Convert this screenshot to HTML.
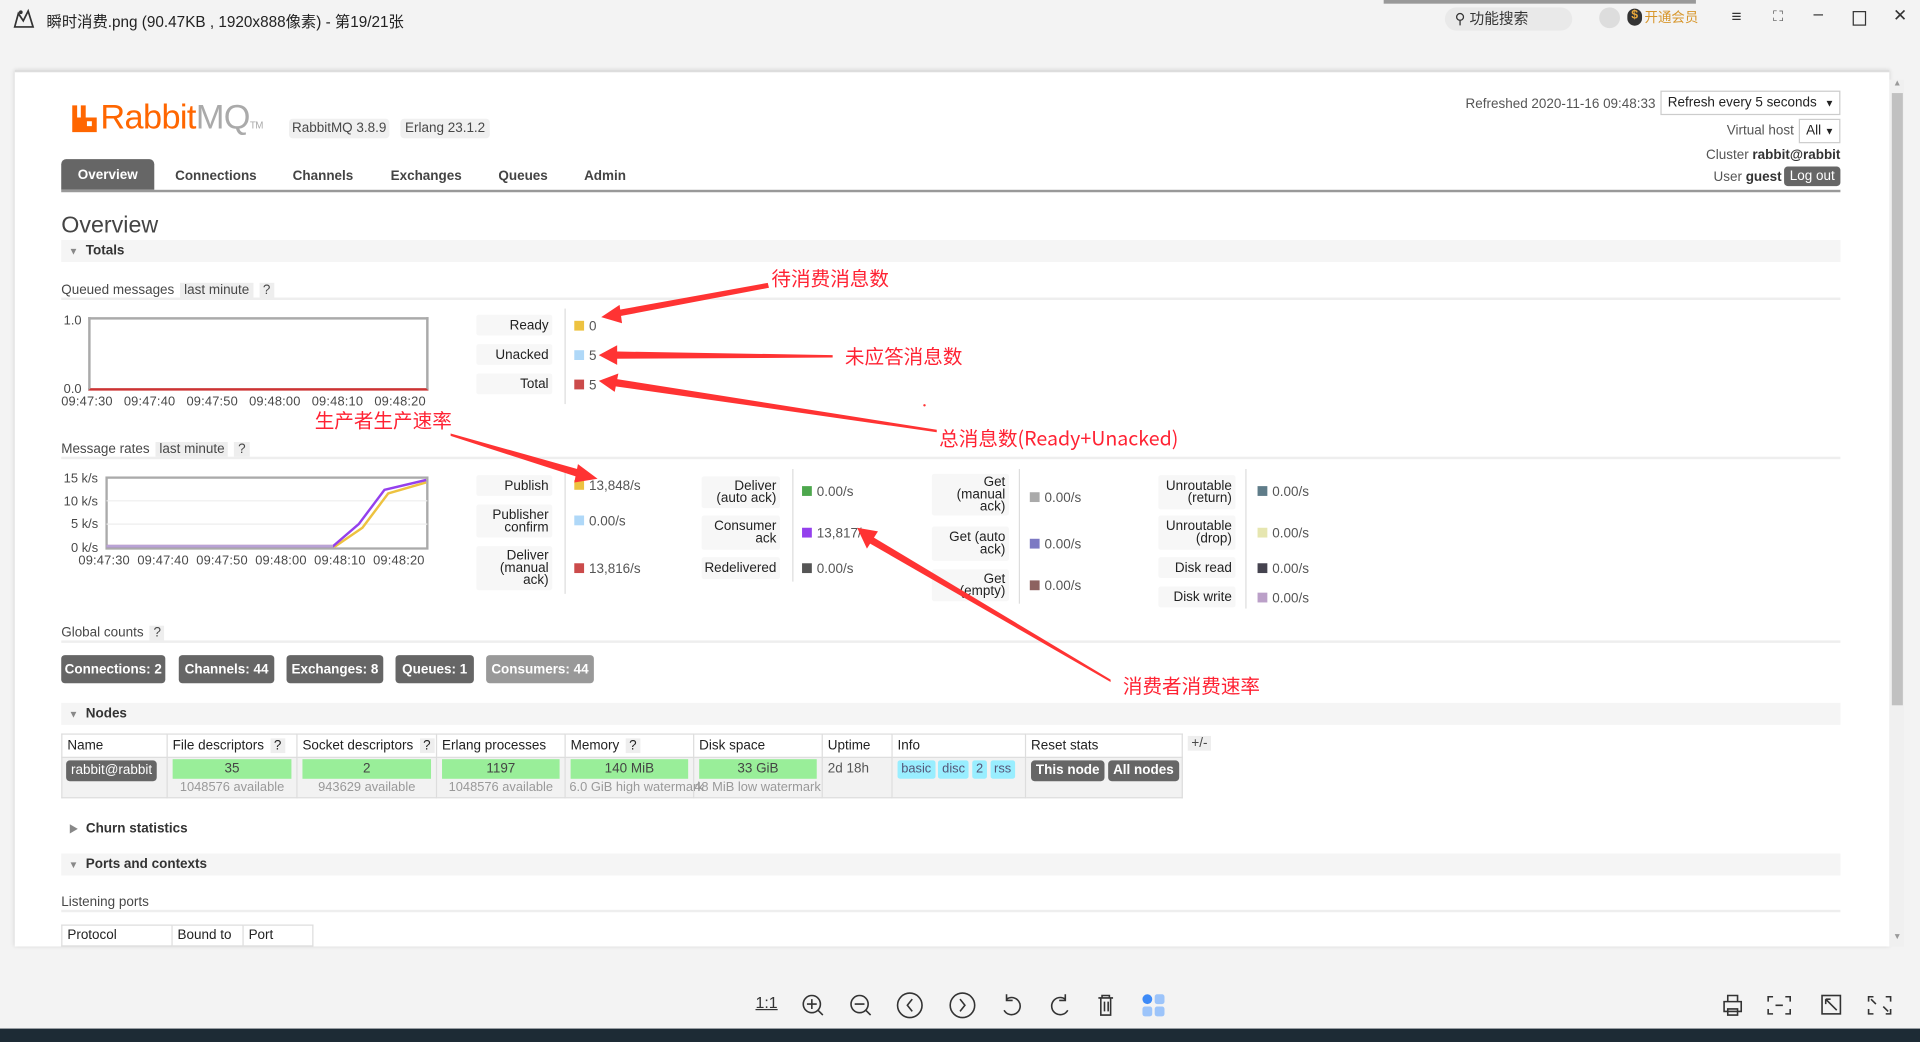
<!DOCTYPE html>
<html><head><meta charset="utf-8"><style>
*{margin:0;padding:0;box-sizing:border-box}
html,body{width:1920px;height:1042px;overflow:hidden;background:#f3f3f3}
#w{position:absolute;left:0;top:0;width:1568px;height:851px;transform:scale(1.22449);transform-origin:0 0;font-family:"Liberation Sans","Noto Sans CJK SC",sans-serif;font-size:11px;color:#484848;background:#f3f3f3}
.a{position:absolute;white-space:nowrap}
.lb{position:absolute;background:#f7f7f7;border-radius:2px;text-align:right;padding-right:3px;line-height:10px;color:#222;font-size:11px;display:flex;align-items:center;justify-content:flex-end}
.v{position:absolute;font-size:11px;color:#555;white-space:nowrap;margin-top:1px}
.v i{display:inline-block;width:8px;height:8px;margin-right:4px;vertical-align:-0px}
.vl{position:absolute;width:1px;background:#ddd}
.bar{position:absolute;left:50px;width:1453px;height:18px;background:#f5f5f5;font-weight:bold;color:#333;padding-left:6px;line-height:19px}
.hl{position:absolute;left:50px;width:1453px;height:2px;background:#eee}
.btn{position:absolute;top:535px;height:23px;background:#666;color:#fff;font-weight:bold;border-radius:3px;line-height:24px;text-align:center}
.q{display:inline-block;background:#eee;padding:0 3px;margin-left:2px}
.cr{color:#f23;font-size:16px;position:absolute;white-space:nowrap;font-family:"Noto Sans CJK SC",sans-serif}
td,th{border:1px solid #ddd;font-weight:normal;text-align:left;padding:0 4px;overflow:visible}
.g{background:#99ee99;color:#444;text-align:center;height:16px;line-height:16px;margin:1px 1px}
.sm{color:#999;text-align:center;font-size:10.5px}
.cy{display:inline-block;background:#99eeff;color:#557;padding:0 3px;border-radius:2px;height:15px;line-height:15px}
.dk{display:inline-block;background:#666;color:#fff;font-weight:bold;padding:0 4px;border-radius:3px;height:17px;line-height:17px}
.t{margin-top:1px}
</style></head><body><div id="w">
<svg class="a" style="left:11px;top:7px" width="18" height="16" viewBox="0 0 18 16"><path d="M1 15 L4 4 L8 10 L12 2 L16 15 Z" fill="none" stroke="#333" stroke-width="1.4"/><circle cx="6" cy="3" r="1.5" fill="#333"/></svg>
<div class="a" style="left:38px;top:7px;font-size:12.5px;color:#222">瞬时消费.png (90.47KB , 1920x888像素) - 第19/21张</div>
<div class="a" style="left:1130px;top:0;width:255px;height:3px;background:#999"></div>
<div class="a" style="left:1180px;top:6px;width:104px;height:19px;background:#e9e9e9;border-radius:10px;font-size:12px;color:#333;padding-left:8px;line-height:19px">⚲ 功能搜索</div>
<div class="a" style="left:1306px;top:6px;width:17px;height:17px;border-radius:50%;background:#ddd"></div>
<div class="a" style="left:1329px;top:7px;width:12px;height:14px;border-radius:6px;background:#333;color:#e9a83b;font-size:10px;text-align:center;font-weight:bold">$</div>
<div class="a" style="left:1343px;top:6px;font-size:11px;color:#d7962b">开通会员</div>
<div class="a" style="left:1414px;top:5px;font-size:14px;color:#333">≡</div>
<div class="a" style="left:1448px;top:6px;font-size:12px;color:#555">⛶</div>
<div class="a" style="left:1481px;top:3px;font-size:14px;color:#333">–</div>
<div class="a" style="left:1513px;top:9px;width:11px;height:12px;border:1px solid #333"></div>
<div class="a" style="left:1546px;top:4px;font-size:14px;color:#333">✕</div>

<div class="a" style="left:12px;top:57px;width:1531px;height:716px;background:#fff;box-shadow:0 0 3px #ccc;border-top:2px solid #ddd"></div>
<div class="a" style="left:1543px;top:65px;width:12px;height:708px;background:#f0f0f0"></div>
<div class="a" style="left:1545px;top:76px;width:9px;height:500px;background:#c1c1c1"></div>
<div class="a" style="left:1546px;top:65px;font-size:7px;color:#999">▲</div>
<div class="a" style="left:1546px;top:762px;font-size:7px;color:#999">▼</div>

<svg class="a" style="left:58px;top:86px" width="22" height="22" viewBox="0 0 22 22"><path d="M1 0h4v10h3V0h4v10h9v12H1z M13 13v4h4v-4z" fill="#f60" fill-rule="evenodd"/></svg>
<div class="a" style="left:82px;top:80px;font-size:28px;color:#f60;letter-spacing:-0.5px">Rabbit<span style="color:#aaa">MQ</span><span style="font-size:8px;color:#aaa">TM</span></div>
<div class="a" style="left:236px;top:97px;width:82px;height:16px;background:#f0f0f0;border-radius:3px;text-align:center;line-height:17px">RabbitMQ 3.8.9</div>
<div class="a" style="left:327px;top:97px;width:73px;height:16px;background:#f0f0f0;border-radius:3px;text-align:center;line-height:17px">Erlang 23.1.2</div>
<div class="a" style="left:50px;top:130px;width:76px;height:25px;background:#666;color:#fff;font-weight:bold;border-radius:4px 4px 0 0;text-align:center;line-height:27px">Overview</div>
<div class="a t" style="left:143px;top:137px;font-weight:bold;color:#444">Connections</div>
<div class="a t" style="left:239px;top:137px;font-weight:bold;color:#444">Channels</div>
<div class="a t" style="left:319px;top:137px;font-weight:bold;color:#444">Exchanges</div>
<div class="a t" style="left:407px;top:137px;font-weight:bold;color:#444">Queues</div>
<div class="a t" style="left:477px;top:137px;font-weight:bold;color:#444">Admin</div>
<div class="a" style="left:50px;top:155px;width:1453px;height:2px;background:#999"></div>
<div class="a t" style="right:216px;top:78px;color:#555">Refreshed 2020-11-16 09:48:33</div>
<div class="a" style="left:1356px;top:74px;width:147px;height:20px;border:1px solid #ccc;padding-left:5px;line-height:19px;color:#222">Refresh every 5 seconds<span style="position:absolute;right:4px;font-size:8px">▼</span></div>
<div class="a t" style="right:103px;top:100px;color:#555">Virtual host</div>
<div class="a" style="left:1469px;top:97px;width:34px;height:20px;border:1px solid #ccc;padding-left:5px;line-height:19px;color:#222">All<span style="position:absolute;right:4px;font-size:8px">▼</span></div>
<div class="a t" style="right:65px;top:120px;color:#555">Cluster <b style="color:#333">rabbit@rabbit</b></div>
<div class="a t" style="right:113px;top:138px;color:#555">User <b style="color:#333">guest</b></div>
<div class="a" style="left:1457px;top:136px;width:46px;height:16px;background:#666;color:#fff;border-radius:3px;text-align:center;line-height:17px">Log out</div>

<div class="a" style="left:50px;top:174px;font-size:19px;color:#444">Overview</div>
<div class="bar" style="top:196px"><span style="font-size:8px;color:#888">▼</span>&nbsp; Totals</div>

<div class="a t" style="left:50px;top:230px">Queued messages <span class="q">last minute</span> <span class="q">?</span></div>
<div class="hl" style="top:243px"></div>
<div class="a" style="left:52px;top:256px;font-size:10.5px">1.0</div>
<div class="a" style="left:52px;top:312px;font-size:10.5px">0.0</div>
<div class="a" style="left:72px;top:259px;width:278px;height:60px;border:2px solid #aaa;border-bottom:2px solid #c33"></div>
<div class="a" style="left:50px;top:322px;font-size:10.5px;letter-spacing:0.15px;word-spacing:6px">09:47:30 09:47:40 09:47:50 09:48:00 09:48:10 09:48:20</div>
<div class="lb" style="left:389px;top:257px;width:62px;height:17px">Ready</div>
<div class="lb" style="left:389px;top:281px;width:62px;height:17px">Unacked</div>
<div class="lb" style="left:389px;top:305px;width:62px;height:17px">Total</div>
<div class="vl" style="left:461px;top:252px;height:78px"></div>
<div class="v" style="left:469px;top:260px"><i style="background:#edc240"></i>0</div>
<div class="v" style="left:469px;top:284px"><i style="background:#afd8f8"></i>5</div>
<div class="v" style="left:469px;top:308px"><i style="background:#cb4b4b"></i>5</div>

<div class="a t" style="left:50px;top:360px">Message rates <span class="q">last minute</span> <span class="q">?</span></div>
<div class="hl" style="top:373px"></div>
<div class="a" style="left:52px;top:385px;font-size:10.5px">15 k/s</div>
<div class="a" style="left:52px;top:404px;font-size:10.5px">10 k/s</div>
<div class="a" style="left:58px;top:422px;font-size:10.5px">5 k/s</div>
<div class="a" style="left:58px;top:442px;font-size:10.5px">0 k/s</div>
<svg class="a" style="left:86px;top:389px" width="264" height="60"><rect x="1" y="1" width="262" height="58" fill="none" stroke="#aaa" stroke-width="2"/><line x1="1" y1="20" x2="263" y2="20" stroke="#eee"/><line x1="1" y1="39" x2="263" y2="39" stroke="#eee"/><polyline points="1,57 188,57 210,42 231,14 262,5" fill="none" stroke="#edc240" stroke-width="2"/><polyline points="1,57 186,57 207,39 228,11 262,3" fill="none" stroke="#9440ed" stroke-width="2"/><line x1="1" y1="57" x2="186" y2="57" stroke="#b9a3d6" stroke-width="2"/></svg>
<div class="a" style="left:64px;top:452px;font-size:10.5px;letter-spacing:0.15px;word-spacing:3px">09:47:30 09:47:40 09:47:50 09:48:00 09:48:10 09:48:20</div>

<div class="lb" style="left:389px;top:388px;width:62px;height:17px">Publish</div>
<div class="lb" style="left:389px;top:412px;width:62px;height:27px">Publisher<br>confirm</div>
<div class="lb" style="left:389px;top:446px;width:62px;height:36px">Deliver<br>(manual<br>ack)</div>
<div class="vl" style="left:461px;top:383px;height:102px"></div>
<div class="v" style="left:469px;top:390px"><i style="background:#edc240"></i>13,848/s</div>
<div class="v" style="left:469px;top:419px"><i style="background:#afd8f8"></i>0.00/s</div>
<div class="v" style="left:469px;top:458px"><i style="background:#cb4b4b"></i>13,816/s</div>

<div class="lb" style="left:573px;top:389px;width:64px;height:26px">Deliver<br>(auto ack)</div>
<div class="lb" style="left:573px;top:421px;width:64px;height:28px">Consumer<br>ack</div>
<div class="lb" style="left:573px;top:455px;width:64px;height:18px">Redelivered</div>
<div class="vl" style="left:647px;top:383px;height:92px"></div>
<div class="v" style="left:655px;top:395px"><i style="background:#4da74d"></i>0.00/s</div>
<div class="v" style="left:655px;top:429px"><i style="background:#9440ed"></i>13,817/s</div>
<div class="v" style="left:655px;top:458px"><i style="background:#555"></i>0.00/s</div>

<div class="lb" style="left:761px;top:387px;width:63px;height:34px">Get<br>(manual<br>ack)</div>
<div class="lb" style="left:761px;top:430px;width:63px;height:28px">Get (auto<br>ack)</div>
<div class="lb" style="left:761px;top:465px;width:63px;height:26px">Get<br>(empty)</div>
<div class="vl" style="left:832px;top:383px;height:110px"></div>
<div class="v" style="left:841px;top:400px"><i style="background:#aaa"></i>0.00/s</div>
<div class="v" style="left:841px;top:438px"><i style="background:#7c79c3"></i>0.00/s</div>
<div class="v" style="left:841px;top:472px"><i style="background:#8d6260"></i>0.00/s</div>

<div class="lb" style="left:946px;top:388px;width:63px;height:28px">Unroutable<br>(return)</div>
<div class="lb" style="left:946px;top:421px;width:63px;height:28px">Unroutable<br>(drop)</div>
<div class="lb" style="left:946px;top:455px;width:63px;height:17px">Disk read</div>
<div class="lb" style="left:946px;top:479px;width:63px;height:17px">Disk write</div>
<div class="vl" style="left:1017px;top:383px;height:114px"></div>
<div class="v" style="left:1027px;top:395px"><i style="background:#5f7c89"></i>0.00/s</div>
<div class="v" style="left:1027px;top:429px"><i style="background:#e6e6b0"></i>0.00/s</div>
<div class="v" style="left:1027px;top:458px"><i style="background:#45434f"></i>0.00/s</div>
<div class="v" style="left:1027px;top:482px"><i style="background:#bba0c8"></i>0.00/s</div>

<div class="a t" style="left:50px;top:510px">Global counts <span class="q">?</span></div>
<div class="hl" style="top:523px"></div>
<div class="btn" style="left:50px;width:85px">Connections: 2</div>
<div class="btn" style="left:146px;width:78px">Channels: 44</div>
<div class="btn" style="left:234px;width:79px">Exchanges: 8</div>
<div class="btn" style="left:323px;width:64px">Queues: 1</div>
<div class="btn" style="left:397px;width:88px;background:#999">Consumers: 44</div>

<div class="bar" style="top:574px"><span style="font-size:8px;color:#888">▼</span>&nbsp; Nodes</div>
<table class="a" style="left:50px;top:599px;width:915px;border-collapse:collapse;table-layout:fixed;font-size:11px;color:#222">
<colgroup><col style="width:86px"><col style="width:106px"><col style="width:114px"><col style="width:105px"><col style="width:105px"><col style="width:105px"><col style="width:57px"><col style="width:109px"><col style="width:128px"></colgroup>
<tr style="height:19px"><td>Name</td><td style="white-space:nowrap">File descriptors <span class="q">?</span></td><td style="white-space:nowrap">Socket descriptors <span class="q">?</span></td><td style="white-space:nowrap">Erlang processes</td><td>Memory <span class="q">?</span></td><td>Disk space</td><td>Uptime</td><td>Info</td><td>Reset stats</td></tr>
<tr style="height:33px;background:#f2f2f2;vertical-align:top"><td style="padding:2px 3px;white-space:nowrap"><span class="dk" style="font-weight:normal">rabbit@rabbit</span></td><td style="white-space:nowrap;padding:0 3px"><div class="g">35</div><div class="sm">1048576 available</div></td><td style="white-space:nowrap;padding:0 3px"><div class="g">2</div><div class="sm">943629 available</div></td><td style="white-space:nowrap;padding:0 3px"><div class="g">1197</div><div class="sm">1048576 available</div></td><td style="white-space:nowrap;padding:0 3px"><div class="g">140 MiB</div><div class="sm" style="text-align:left">6.0 GiB high watermark</div></td><td style="white-space:nowrap;padding:0 3px"><div class="g">33 GiB</div><div class="sm" style="text-align:left;margin-left:-3px">48 MiB low watermark</div></td><td style="padding-top:3px;color:#555">2d 18h</td><td style="padding-top:2px;font-size:10.5px;white-space:nowrap"><span class="cy">basic</span> <span class="cy">disc</span> <span class="cy">2</span> <span class="cy">rss</span></td><td style="padding-top:2px;white-space:nowrap"><span class="dk">This node</span> <span class="dk">All nodes</span></td></tr>
</table>
<div class="a" style="left:970px;top:601px;background:#eee;padding:0 3px">+/-</div>

<div class="a t" style="left:56px;top:670px;font-weight:bold;color:#333"><span style="font-size:8px;color:#888">▶</span>&nbsp; Churn statistics</div>
<div class="bar" style="top:697px"><span style="font-size:8px;color:#888">▼</span>&nbsp; Ports and contexts</div>
<div class="a t" style="left:50px;top:730px">Listening ports</div>
<div class="hl" style="top:743px"></div>
<table class="a" style="left:50px;top:755px;border-collapse:collapse;font-size:11px;color:#222"><tr style="height:17px"><td style="width:90px">Protocol</td><td style="width:58px">Bound to</td><td style="width:57px">Port</td></tr></table>

<svg class="a" style="left:0;top:0" width="1568" height="851">
<g fill="#f33">
<polygon points="627,231 500,254 502,259 628,235"/><polygon points="491,259 506,249 508,264"/>
<polygon points="680,290 500,287 500,293 680,292"/><polygon points="489,290 504,282 504,298"/>
<polygon points="765,351 500,309 499,315 765,353"/><polygon points="489,311 505,305 502,320"/>
<polygon points="368,354 475,384 473,390 368,356"/><polygon points="488,391 472,379 469,394"/>
<polygon points="907,555 712,438 709,443 907,557"/><polygon points="700,431 717,434 708,448"/>
</g>
<circle cx="755" cy="331" r="1" fill="#f33"/>
</svg>
<div class="cr" style="left:630px;top:214px">待消费消息数</div>
<div class="cr" style="left:690px;top:278px">未应答消息数</div>
<div class="cr" style="left:767px;top:345px">总消息数(Ready+Unacked)</div>
<div class="cr" style="left:257px;top:330px">生产者生产速率</div>
<div class="cr" style="left:917px;top:547px">消费者消费速率</div>

<div class="a" style="left:617px;top:811px;font-size:13px;color:#333;text-decoration:underline">1:1</div>
<svg class="a" style="left:654px;top:810px" width="300" height="22" fill="none" stroke="#333" stroke-width="1.3">
<circle cx="9" cy="10" r="7"/><path d="M14 15l4 4M9 6v8M5 10h8"/>
<circle cx="48" cy="10" r="7"/><path d="M53 15l4 4M44 10h8"/>
<circle cx="89" cy="11" r="10"/><path d="M91 6l-4 5 4 5"/>
<circle cx="132" cy="11" r="10"/><path d="M130 6l4 5-4 5"/>
<path d="M168 6a7 7 0 1 1 -2 9M168 2v5h5"/>
<path d="M216 6a7 7 0 1 0 2 9M216 2v5h-5"/>
<path d="M243 5h12M246 5v-2h6v2M245 5v14h8v-14M248 8v8M251 8v8"/>
</svg>
<div class="a" style="left:933px;top:812px;width:8px;height:8px;border-radius:50%;background:#3d8af7"></div>
<div class="a" style="left:943px;top:812px;width:8px;height:8px;border-radius:2px;background:#9cc4fa"></div>
<div class="a" style="left:933px;top:822px;width:8px;height:8px;border-radius:2px;background:#9cc4fa"></div>
<div class="a" style="left:943px;top:822px;width:8px;height:8px;border-radius:2px;background:#9cc4fa"></div>
<svg class="a" style="left:1404px;top:810px" width="150" height="22" fill="none" stroke="#333" stroke-width="1.3">
<path d="M4 8h14v8H4zM7 8V3h8v5M7 14h8v5H7z"/>
<path d="M44 4h-4v4M54 4h4v4M44 18h-4v-4M54 18h4v-4M46 11h6"/>
<rect x="84" y="3" width="15" height="15"/><path d="M87 6l9 9M87 6h4M87 6v4"/>
<path d="M126 4h-4v4M136 4h4v4M126 18h-4v-4M136 18h4v-4M124 6l4 4M138 16l-4-4"/>
</svg>
<div class="a" style="left:0;top:840px;width:1568px;height:11px;background:#1d2b35"></div>
</div></body></html>
